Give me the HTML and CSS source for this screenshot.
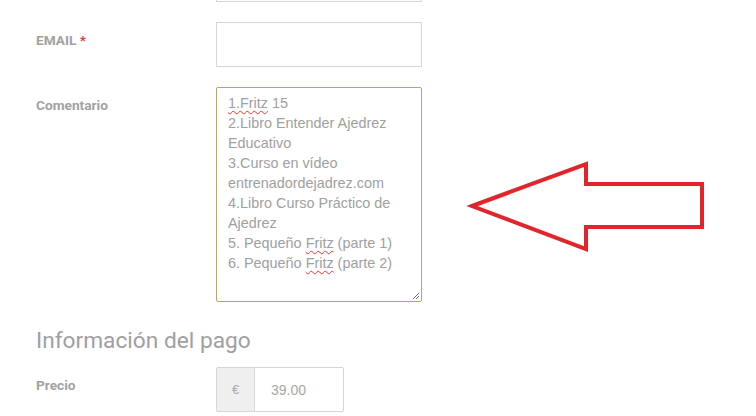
FILE: index.html
```html
<!DOCTYPE html>
<html lang="es">
<head>
<meta charset="utf-8">
<link rel="stylesheet" href="styles.css">
</head>
<body>
<div class="page">
  <form class="form">
    <div class="row">
      <div class="label"></div>
      <div class="input"></div>
    </div>
    <div class="row">
      <div class="label">EMAIL <span class="req">*</span></div>
      <div class="input"></div>
    </div>
    <div class="row">
      <div class="label">Comentario</div>
      <div class="textarea">
        <div class="ta-text"><span class="sp">1.Fritz</span> 15<br>2.Libro Entender Ajedrez Educativo<br>3.Curso en vídeo entrenadordejadrez.com<br>4.Libro Curso Práctico de Ajedrez<br>5. Pequeño <span class="sp">Fritz</span> (parte 1)<br>6. Pequeño <span class="sp">Fritz</span> (parte 2)</div>
        <svg class="grip" width="9" height="9" viewBox="0 0 9 9"><path d="M8 2 L2 8 M8 5 L5 8" stroke="#777" stroke-width="1"/></svg>
      </div>
    </div>
    <h2 class="heading">Información del pago</h2>
    <div class="row">
      <div class="label">Precio</div>
      <div class="price">
        <span class="addon">€</span>
        <span class="pval">39.00</span>
      </div>
    </div>
  </form>
  <svg class="arrow" width="756" height="416" viewBox="0 0 756 416">
    <polygon points="472,206 586,164 586,184 702,184 702,227 586,227 586,249" fill="none" stroke="#e3242b" stroke-width="4" stroke-linejoin="miter"/>
  </svg>
</div>
</body>
</html>
```

FILE: styles.css
```css
html, body {
  margin: 0;
  padding: 0;
  background: #fff;
}
.page {
  position: relative;
  width: 756px;
  height: 416px;
  overflow: hidden;
}
.form {
  margin-top: -43px;
  padding-left: 36px;
  display: flex;
  flex-direction: column;
  gap: 20px;
  font-family: Roboto, "Liberation Sans", sans-serif;
}
.row {
  display: grid;
  grid-template-columns: 180px 206px;
  align-items: start;
}
.label {
  padding-top: 8px;
  line-height: 20px;
  font-size: 13.7px;
  font-weight: 700;
  color: #a2a2a2;
}
.req {
  color: #e8383d;
}
.input {
  height: 43px;
  border: 1px solid #d6d6d6;
  background: #fff;
}
.textarea {
  position: relative;
  height: 208px;
  border: 1px solid #b9a46c;
  border-radius: 2px;
  padding: 5px 10px 0 11px;
  box-sizing: content-box;
  width: 183px;
}
.ta-text {
  font-family: "Liberation Sans", Arial, sans-serif;
  font-size: 14.4px;
  line-height: 20px;
  color: #a0a0a0;
}
.sp {
  text-decoration: underline wavy #e33;
  text-decoration-thickness: 1px;
  text-underline-offset: 2px;
}
.grip {
  position: absolute;
  right: 1px;
  bottom: 1px;
}
.heading {
  margin: 5px 0 -8px;
  font-size: 22.7px;
  font-weight: 400;
  line-height: 28px;
  color: #a0a0a0;
}
.price {
  display: flex;
  width: 126px;
  height: 43px;
  border: 1px solid #d6d6d6;
  border-radius: 2px;
  font-family: "Liberation Sans", Arial, sans-serif;
  font-size: 14px;
  color: #a8a8a8;
}
.addon {
  width: 37px;
  background: #efefef;
  border-right: 1px solid #d6d6d6;
  display: flex;
  align-items: center;
  justify-content: center;
  color: #aaa;
  font-size: 13px;
}
.pval {
  display: flex;
  align-items: center;
  padding-left: 16px;
}
.arrow {
  position: absolute;
  left: 0;
  top: 0;
  pointer-events: none;
}
```
